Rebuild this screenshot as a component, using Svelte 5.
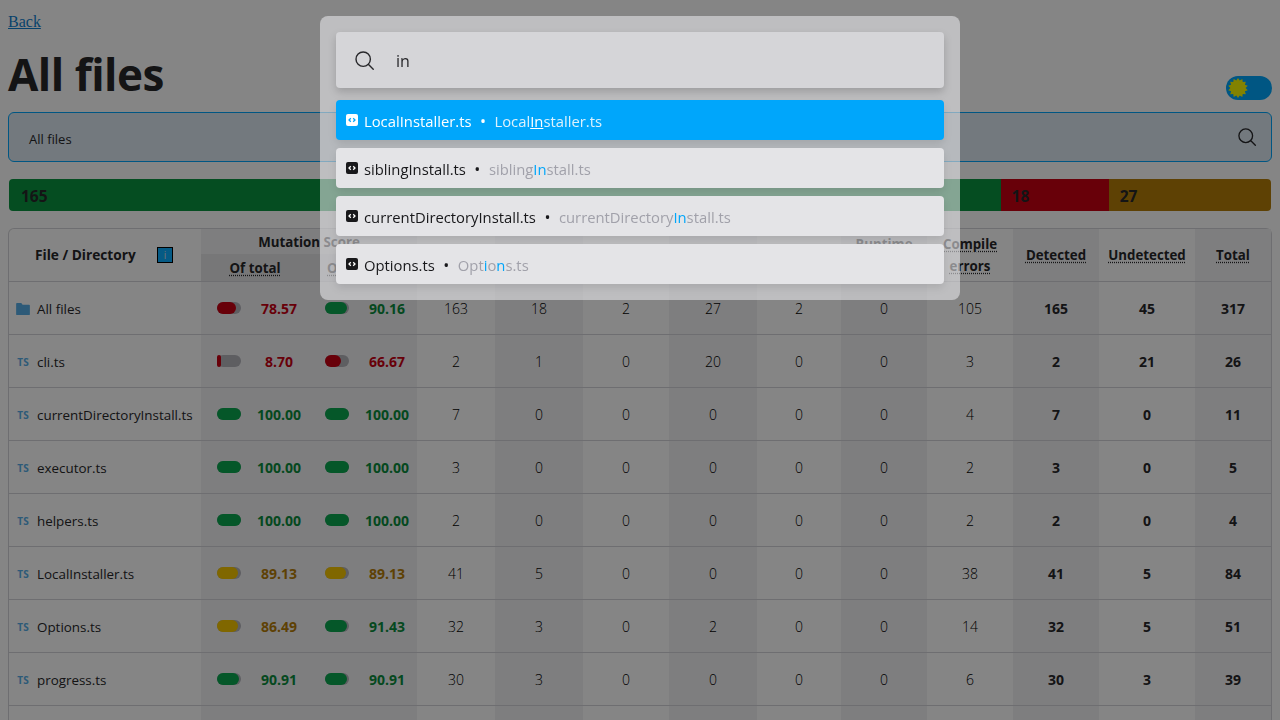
<script>
  const rows = [
    { icon: 'dir', name: 'All files', a: 78.57, b: 90.16, v: [163, 18, 2, 27, 2, 0, 105, 165, 45, 317] },
    { name: 'cli.ts', a: 8.7, b: 66.67, v: [2, 1, 0, 20, 0, 0, 3, 2, 21, 26] },
    { name: 'currentDirectoryInstall.ts', a: 100, b: 100, v: [7, 0, 0, 0, 0, 0, 4, 7, 0, 11] },
    { name: 'executor.ts', a: 100, b: 100, v: [3, 0, 0, 0, 0, 0, 2, 3, 0, 5] },
    { name: 'helpers.ts', a: 100, b: 100, v: [2, 0, 0, 0, 0, 0, 2, 2, 0, 4] },
    { name: 'LocalInstaller.ts', a: 89.13, b: 89.13, v: [41, 5, 0, 0, 0, 0, 38, 41, 5, 84] },
    { name: 'Options.ts', a: 86.49, b: 91.43, v: [32, 3, 0, 2, 0, 0, 14, 32, 5, 51] },
    { name: 'progress.ts', a: 90.91, b: 90.91, v: [30, 3, 0, 0, 0, 0, 6, 30, 3, 39] }
  ];
  const cols = [
    { w: 78, t: 'Killed' }, { w: 88, t: 'Survived', s: 1 }, { w: 86, t: 'Timeout' }, { w: 88, t: 'No coverage', s: 1 },
    { w: 84, t: 'Ignored' }, { w: 86, t: 'Runtime errors', s: 1 }, { w: 86, t: 'Compile errors' },
    { w: 86, t: 'Detected', s: 1, b: 1 }, { w: 96, t: 'Undetected', b: 1 }, { w: 76, t: 'Total', s: 1, b: 1 }
  ];
  const tone = (n) => (n < 80 ? 'bad' : n < 90 ? 'warn' : 'good');
  const fmt = (n) => n.toFixed(2);
  const results = [
    { name: 'LocalInstaller.ts', parts: [['Local'], ['In', 1], ['staller.ts']], sel: true },
    { name: 'siblingInstall.ts', parts: [['sibling'], ['In', 1], ['stall.ts']] },
    { name: 'currentDirectoryInstall.ts', parts: [['currentDirectory'], ['In', 1], ['stall.ts']] },
    { name: 'Options.ts', parts: [['Opt'], ['i', 1], ['o'], ['n', 1], ['s.ts']] }
  ];
  const sun = Array.from({ length: 28 }, (_, i) => {
    const r = i % 2 ? 7.6 : 10;
    const t = (i * Math.PI) / 14;
    return `${(10 + r * Math.sin(t)).toFixed(2)},${(10 - r * Math.cos(t)).toFixed(2)}`;
  }).join(' ');
</script>

{#snippet mag()}
  <svg class="mag" viewBox="0 0 24 24" fill="none" stroke="currentColor" stroke-width="1.6" aria-hidden="true">
    <circle cx="10.5" cy="10.500" r="8.200" />
    <path d="M16.600 16.600 L22 22" stroke-linecap="round" />
  </svg>
{/snippet}

{#snippet bar(n)}
  <div class="score">
    <div class="track"><div class="fill {tone(n)}" style="width:{n}%"></div></div>
    <span class="num {tone(n)}">{fmt(n)}</span>
  </div>
{/snippet}

<div class="page">
  <a class="back" href="#back">Back</a>
  <div class="head">
    <h1>All files</h1>
    <div class="toggle">
      <svg class="sun" viewBox="0 0 20 20" aria-hidden="true"><polygon points={sun} /></svg>
    </div>
  </div>

  <div class="filter">
    <span>All files</span>
    {@render mag()}
  </div>

  <div class="totals">
    <div class="seg g" style="width:{(165 / 210) * 100}%"><b>165</b></div>
    <div class="seg r" style="width:{(18 / 210) * 100}%"><b>18</b></div>
    <div class="seg o" style="width:{(27 / 210) * 100}%"><b>27</b></div>
  </div>

  <div class="wrap">
    <table>
      <colgroup>
        <col style="width:192px" />
        <col style="width:108px" />
        <col style="width:108px" />
        {#each cols as c}<col style="width:{c.w}px" />{/each}
      </colgroup>
      <thead>
        <tr>
          <th rowspan="2" class="file">
            <div class="fh"><span>File / Directory</span><span class="info">i</span></div>
          </th>
          <th colspan="2" class="ms shade">Mutation Score</th>
          {#each cols as c}
            <th rowspan="2" class="side" class:shade={c.s}><span class="u">{c.t}</span></th>
          {/each}
        </tr>
        <tr>
          <th class="sub"><span class="u">Of total</span></th>
          <th class="sub"><span class="u">Of covered</span></th>
        </tr>
      </thead>
      <tbody>
        {#each rows as r}
          <tr>
            <td class="name">
              <div class="nm">
                {#if r.icon === 'dir'}
                  <svg class="folder" viewBox="0 0 16 14" aria-hidden="true">
                    <path d="M1 0h5l1.500 2H15a1 1 0 0 1 1 1v10a1 1 0 0 1-1 1H1a1 1 0 0 1-1-1V1a1 1 0 0 1 1-1z" />
                  </svg>
                {:else}
                  <span class="ts">TS</span>
                {/if}
                <span>{r.name}</span>
              </div>
            </td>
            <td class="shade">{@render bar(r.a)}</td>
            <td class="shade">{@render bar(r.b)}</td>
            {#each cols as c, i}
              <td class="val" class:shade={c.s} class:strong={c.b}>{r.v[i]}</td>
            {/each}
          </tr>
        {/each}
        <tr class="tail">
          <td></td><td class="shade"></td><td class="shade"></td>
          {#each cols as c}<td class:shade={c.s}></td>{/each}
        </tr>
      </tbody>
    </table>
  </div>
</div>

<div class="backdrop"></div>
<div class="modal">
  <div class="search">
    {@render mag()}
    <span>in</span>
  </div>
  {#each results as x}
    <div class="item" class:sel={x.sel}>
      <svg class="fi" viewBox="0 0 12 12" aria-hidden="true">
        <rect width="12" height="12" rx="2" class="fb" />
        <path d="M4.800 4.200 3 6l1.800 1.800M7.200 4.200 9 6 7.200 7.800" class="fc" fill="none" stroke-width="1.300" />
      </svg>
      <span class="t">{x.name}</span>
      <span class="dot">•</span>
      <span class="p">{#each x.parts as part}{#if part[1]}<em>{part[0]}</em>{:else}{part[0]}{/if}{/each}</span>
    </div>
  {/each}
</div>

<style>
  :global(html), :global(body) { overflow: hidden; height: 720px; background: #fff; }
  .page { padding: 8px; font-family: "Open Sans", "Noto Sans", sans-serif; color: #27272a; box-sizing: border-box; }
  .back { display: block; font-family: "Liberation Serif", serif; font-size: 16px; line-height: 28px; color: #0f7fd0; }
  .head { display: flex; justify-content: space-between; align-items: flex-end; height: 64px; }
  h1 { margin: 0 0 -5px; font-size: 44px; line-height: 62px; font-weight: 700; letter-spacing: -0.5px; color: #27272a; }
  .toggle { width: 46px; height: 24px; border-radius: 12px; background: #00a6fb; display: flex; align-items: center; padding-left: 2px; box-sizing: border-box; }
  .sun { width: 20px; height: 20px; fill: #fafa00; }
  .filter { margin-top: 12px; height: 50px; box-sizing: border-box; border: 1px solid #00a6fb; border-radius: 6px; background: #dce8f2; display: flex; align-items: center; justify-content: space-between; padding: 0 14px 0 20px; font-size: 13px; }
  .filter span { margin-top: 4px; }
  .filter .mag { width: 20px; height: 20px; margin-top: -1px; }
  .totals { margin: 17px 1px 0; display: flex; height: 32px; border-radius: 4px; overflow: hidden; font-size: 15.5px; }
  .seg { display: flex; align-items: center; padding: 2px 0 0 12px; color: #27272a; box-sizing: border-box; flex: none; }
  .seg b { font-weight: 700; }
  .seg.g { background: #0b9440; }
  .seg.r { background: #c80012; padding-left: 11px; }
  .seg.o { background: #b57d08; padding-left: 11px; }
  .wrap { margin-top: 17px; border: 1px solid #d4d4d8; border-radius: 6px; border-bottom: 0; }
  table { border-collapse: collapse; table-layout: fixed; width: 1262px; }
  th { font-weight: 700; text-align: center; padding: 1px 0 0; line-height: 22px; font-size: 13.3px; color: #27272a; }
  thead tr:first-child { height: 25px; }
  thead tr:last-child { height: 27px; }
  thead { border-bottom: 1px solid #d4d4d8; }
  .u { text-decoration: underline dotted; text-underline-offset: 2px; }
  .shade { background: #f1f1f3; }
  .sub { background: #e4e4e7; }
  .fh { display: flex; align-items: center; justify-content: space-between; padding: 0 28px 0 26px; font-size: 13.7px; }
  .info { width: 16px; height: 16px; background: #0aacff; border: 1px solid #000; box-sizing: border-box; color: #ddd; font-size: 10px; line-height: 14px; font-weight: 400; }
  tbody tr { height: 53px; border-bottom: 1px solid #d4d4d8; }
  td { padding: 2px 0 0; text-align: center; color: #3f3f46; font-size: 14px; }
  td.val { font-weight: 300; color: #000; }
  td.strong { font-weight: 700; color: #27272a; }
  .nm { display: flex; align-items: center; padding-left: 7px; color: #27272a; white-space: nowrap; font-size: 13.4px; }
  .folder { width: 14px; height: 12px; fill: #56ade6; margin-right: 7px; }
  .ts { width: 14px; font-size: 10px; font-weight: 700; color: #56ade6; margin-right: 7px; }
  .score { display: flex; align-items: center; padding-left: 16px; box-sizing: border-box; margin-top: -1px; }
  .track { width: 24px; height: 12px; border-radius: 6px; background: #b4b4bb; }
  .fill { height: 100%; min-width: 4px; border-radius: 6px; }
  .fill.bad { background: #c80012; }
  .fill.warn { background: #f5c500; }
  .fill.good { background: #0aa750; }
  .num { flex: 1; text-align: center; font-weight: 700; padding-left: 8px; margin-top: 1px; }
  .num.bad { color: #c80012; }
  .num.warn { color: #b57d08; }
  .num.good { color: #0a8c3c; }

  .backdrop { position: fixed; inset: 0; background: rgba(0, 0, 0, 0.48); }
  .modal { position: fixed; left: 320px; top: 16px; width: 640px; height: 284px; box-sizing: border-box; padding: 16px; border-radius: 8px; background: rgba(236, 236, 240, 0.55); display: flex; flex-direction: column; gap: 8px; font-family: "Open Sans", "Noto Sans", sans-serif; color: #18181b; }
  .search { height: 56px; margin-bottom: 4px; background: #d5d5d8; border-radius: 4px; display: flex; align-items: center; padding-left: 18px; font-size: 16px; box-shadow: 0 4px 8px rgba(0, 0, 0, 0.18); color: #27272a; }
  .search span { margin-top: 2px; }
  .search .mag { width: 21px; height: 21px; margin-right: 21px; }
  .item { height: 40px; background: #e4e4e7; border-radius: 4px; display: flex; align-items: center; padding-left: 10px; font-size: 14.8px; color: #18181b; box-shadow: 0 4px 8px rgba(0, 0, 0, 0.1); }
  .item .fi { width: 12px; height: 12px; margin-right: 6px; flex: none; }
  .item span { margin-top: 2px; }
  .fb { fill: #18181b; }
  .fc { stroke: #fff; }
  .dot { margin: 0 8.5px; font-size: 16px; }
  .p { color: #a1a1aa; }
  .p em { font-style: normal; color: #00a6fb; }
  .item.sel { background: #00a6fb; color: #fff; }
  .item.sel .fb { fill: #fff; }
  .item.sel .fc { stroke: #00a6fb; }
  .item.sel .p { color: #dcf1fc; }
  .item.sel .p em { color: #fff; text-decoration: underline; }
</style>
